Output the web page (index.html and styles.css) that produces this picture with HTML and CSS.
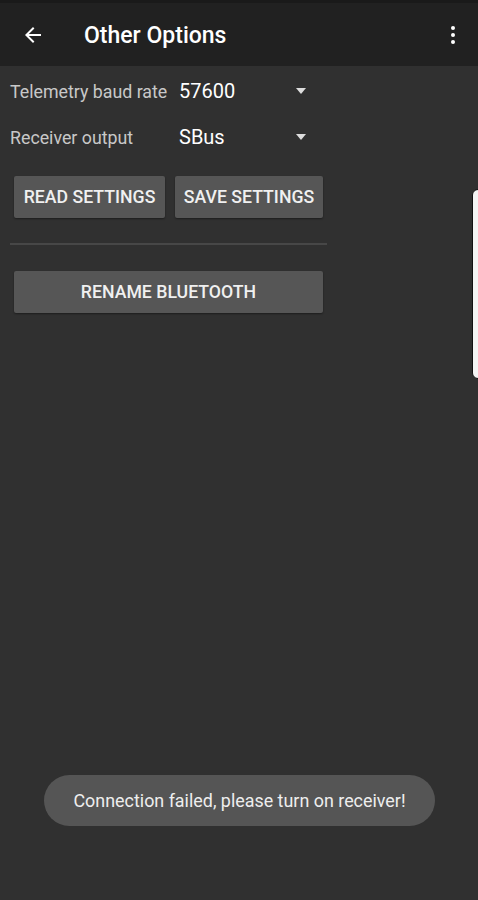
FILE: index.html
```html
<!DOCTYPE html>
<html lang="en">
<head>
  <meta charset="UTF-8">
  <title>Other Options</title>
  <link rel="stylesheet" href="styles.css">
</head>
<body>

  <div class="toolbar">
    <svg class="back" width="24" height="24" viewBox="0 0 24 24">
      <path d="M20 11H7.83l5.59-5.59L12 4l-8 8 8 8 1.41-1.41L7.83 13H20v-2z" fill="#fff"/>
    </svg>
    <div class="title">Other Options</div>
    <svg class="more" width="24" height="24" viewBox="0 0 24 24">
      <circle cx="12" cy="5" r="2" fill="#fff"/>
      <circle cx="12" cy="12" r="2" fill="#fff"/>
      <circle cx="12" cy="19" r="2" fill="#fff"/>
    </svg>
  </div>

  <div class="content">
    <div class="row">
      <div class="label">Telemetry baud rate</div>
      <div class="spinner">
        <span class="value">57600</span>
        <span class="arrow"></span>
      </div>
    </div>
    <div class="row">
      <div class="label">Receiver output</div>
      <div class="spinner">
        <span class="value">SBus</span>
        <span class="arrow"></span>
      </div>
    </div>

    <div class="btn-row">
      <button class="btn read">READ SETTINGS</button>
      <button class="btn save">SAVE SETTINGS</button>
    </div>

    <div class="divider"></div>

    <button class="btn wide">RENAME BLUETOOTH</button>
  </div>

  <!-- edge panel handle -->
  <div class="edge"></div>

  <div class="toast">Connection failed, please turn on receiver!</div>

</body>
</html>
```

FILE: styles.css
```css
html, body {
  margin: 0;
  height: 100%;
}

body {
  font-family: Roboto, 'Noto Sans', sans-serif;
  background: #303030;
  color: #fff;
  position: relative;
  overflow: hidden;
}

.toolbar {
  height: 66px;
  background: #212121;
  border-top: 3px solid #1a1a1a;
  box-sizing: border-box;
  display: flex;
  align-items: center;
}

.back {
  margin-left: 21px;
  width: 24px;
  height: 24px;
}

.title {
  margin-left: 39px;
  margin-top: 2px;
  font-size: 23px;
  font-weight: 500;
  flex: 1;
}

.more {
  margin-right: 13px;
}

.content {
  width: 318px;
  padding: 0 0 0 10px;
}

.row {
  display: flex;
  align-items: center;
  height: 46px;
}

.row:first-child {
  margin-top: 2px;
}

.label {
  width: 169px;
  font-size: 17.8px;
  color: #c8c8c8;
  white-space: nowrap;
}

.spinner {
  display: flex;
  align-items: center;
  width: 130px;
}

.value {
  font-size: 20px;
  flex: 1;
}

.arrow {
  width: 0;
  height: 0;
  border-left: 5px solid transparent;
  border-right: 5px solid transparent;
  border-top: 6px solid #ddd;
  margin-right: 3px;
}

.btn-row {
  display: flex;
  gap: 10px;
  margin-top: 16px;
  padding-left: 4px;
}

.btn {
  background: #565656;
  color: #f0f0f0;
  border: none;
  border-radius: 2px;
  height: 42px;
  font-family: Roboto, 'Noto Sans', sans-serif;
  font-size: 17.7px;
  font-weight: 500;
  padding: 0;
  white-space: nowrap;
  box-shadow: 0 1px 2px rgba(0, 0, 0, 0.4);
}

.read {
  width: 151px;
}

.save {
  width: 148px;
}

.divider {
  height: 2px;
  background: #474747;
  width: 317px;
  margin-top: 25px;
}

.wide {
  display: block;
  width: 309px;
  margin: 26px 0 0 4px;
}

.edge {
  position: absolute;
  right: -6px;
  top: 189px;
  width: 10px;
  height: 188px;
  background: #f4f4f4;
  border: 1px solid #111;
  border-radius: 6px;
}

.toast {
  position: absolute;
  left: 44px;
  top: 775px;
  width: 391px;
  height: 51px;
  border-radius: 26px;
  background: #555;
  color: #eee;
  font-size: 17.9px;
  display: flex;
  align-items: center;
  justify-content: center;
}
```
